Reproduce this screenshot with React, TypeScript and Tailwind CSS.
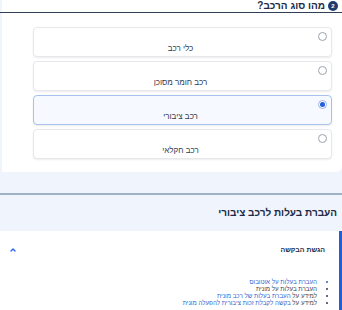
import { ChevronUp } from "lucide-react"

const vehicleTypes = [
  { label: "כלי רכב", selected: false },
  { label: "רכב חומר מסוכן", selected: false },
  { label: "רכב ציבורי", selected: true },
  { label: "רכב חקלאי", selected: false },
]

function Radio({ checked }: { checked: boolean }) {
  return (
    <div
      className={
        checked
          ? "w-[9px] h-[9px] rounded-full border border-[#9db4e6] bg-white flex items-center justify-center"
          : "w-[9px] h-[9px] rounded-full border border-[#9aa3ad] bg-white"
      }
    >
      {checked && <div className="w-[5px] h-[5px] rounded-full bg-[#1f5fe0]" />}
    </div>
  )
}

export default function App() {
  return (
    <div
      dir="rtl"
      className="w-[342px] h-[310px] overflow-hidden bg-[#f0f5fd] font-['Liberation_Sans',sans-serif] text-[#27344a]"
    >
      {/* Question panel */}
      <div className="w-[340px] bg-white rounded-br-md pb-[13px]">
        <div className="h-[13px] flex items-center gap-[3px] pr-[4px] border-b border-[#2f3f55] w-[342px]">
          <div className="w-[10px] h-[10px] rounded-full bg-[#1c3b6e] flex items-center justify-center text-white text-[6px] font-bold leading-none">
            2
          </div>
          <h2 className="text-[10px] font-bold leading-none text-[#1d2b45]">מהו סוג הרכב?</h2>
        </div>

        <div className="flex flex-col gap-[4px] pt-[14px] pr-[10px] pl-[31px]">
          {vehicleTypes.map((v) => (
            <div
              key={v.label}
              className={
                v.selected
                  ? "h-[30px] rounded-[4px] border border-[#a9c1ef] bg-[#f6f9ff] shadow-[0_1px_2px_rgba(0,0,0,0.08)] pt-[4px] pr-[4px] flex flex-col"
                  : "h-[30px] rounded-[4px] border border-[#e6e8ec] bg-white shadow-[0_1px_2px_rgba(0,0,0,0.08)] pt-[4px] pr-[4px] flex flex-col"
              }
            >
              <Radio checked={v.selected} />
              <div className="text-center text-[8px] leading-none mt-[4px] text-[#2f3b52]">{v.label}</div>
            </div>
          ))}
        </div>
      </div>

      {/* Section */}
      <div className="pt-[21px]">
        <div className="border-t-2 border-[#9fb2c6] h-[38px] flex items-center pr-[5px]">
          <h3 className="text-[10px] font-bold text-[#1a2a47] leading-none">העברת בעלות לרכב ציבורי</h3>
        </div>

        <div className="bg-white border-r-[3px] border-[#1f5fd8] h-[80px] pr-[14px] pl-[9px] pt-[14px]">
          <div className="flex items-center justify-between">
            <span className="text-[7px] font-bold text-[#1d2b45]">הגשת הבקשה</span>
            <ChevronUp className="w-[8px] h-[8px] text-[#2563eb]" strokeWidth={4} />
          </div>

          <ul className="mt-[22px] pr-[8px] list-disc text-[6.2px] leading-[7px] text-[#2f3b52]">
            <li className="text-[#2d5fd0]">העברת בעלות על אוטובוס</li>
            <li>העברת בעלות על מונית</li>
            <li>
              למידע על <span className="text-[#2d5fd0]">העברת בעלות של רכב מונית</span>
            </li>
            <li>
              למידע על <span className="text-[#2d5fd0]">בקשה לקבלת זכות ציבורית להפעלה מונית</span>
            </li>
          </ul>
        </div>
      </div>
    </div>
  )
}
